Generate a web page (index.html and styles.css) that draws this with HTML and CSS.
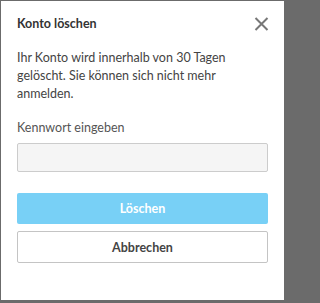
FILE: index.html
```html
<!DOCTYPE html>
<html lang="de">
<head>
<meta charset="utf-8">
<link rel="stylesheet" href="styles.css">
</head>
<body>
<div class="dialog">
  <div class="header">
    <h2 class="title">Konto löschen</h2>
    <button class="close" aria-label="Schließen">
      <svg width="15" height="14" viewBox="0 0 15 14"><path d="M1.5 1L13.5 13M13.5 1L1.5 13" stroke="#777" stroke-width="2" fill="none"/></svg>
    </button>
  </div>
  <p class="message">Ihr Konto wird innerhalb von 30 Tagen gelöscht. Sie können sich nicht mehr anmelden.</p>
  <label class="label">Kennwort eingeben</label>
  <input class="input" type="password">
  <div class="actions">
    <button class="btn btn-primary">Löschen</button>
    <button class="btn btn-secondary">Abbrechen</button>
  </div>
</div>
</body>
</html>
```
FILE: styles.css
```css
html, body {
  margin: 0;
  padding: 0;
}
html {
  background: #6b6b6b;
}
body {
  width: 287px;
  height: 303px;
  padding: 1px 3px 3px 1px;
  box-sizing: border-box;
  font-family: Lato, "Open Sans", sans-serif;
  color: #333;
}
.dialog {
  background: #fff;
  width: 283px;
  height: 299px;
  box-sizing: border-box;
  padding: 0 16px;
  display: flex;
  flex-direction: column;
}
.header {
  display: flex;
  justify-content: space-between;
  align-items: center;
  height: 45px;
}
.title {
  margin: 0;
  font-size: 12.5px;
  line-height: 15px;
  font-weight: 700;
  color: #333;
}
.close {
  border: 0;
  background: none;
  padding: 0;
  margin-right: -1px;
  width: 15px;
  height: 14px;
  display: flex;
}
.message {
  margin: 3px 0 0;
  font-size: 12.5px;
  line-height: 18px;
  color: #444;
}
.label {
  margin-top: 17px;
  font-size: 12.5px;
  line-height: 15px;
  color: #555;
}
.input {
  margin-top: 8px;
  height: 29px;
  box-sizing: border-box;
  border: 1px solid #ccc;
  border-radius: 2px;
  background: #f5f5f5;
}
.actions {
  margin-top: 21px;
  display: flex;
  flex-direction: column;
  gap: 7px;
}
.btn {
  border-radius: 2px;
  font-family: Lato, "Open Sans", sans-serif;
  font-size: 12.5px;
  font-weight: 700;
}
.btn-primary {
  height: 31px;
  background: #78d0f6;
  border: 0;
  color: #fff;
}
.btn-secondary {
  height: 32px;
  background: #fff;
  border: 1px solid #c4c4c4;
  color: #444;
}
```
